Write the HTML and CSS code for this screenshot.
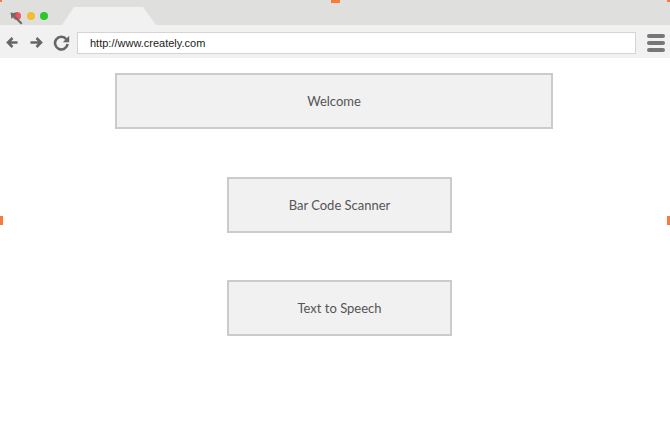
FILE: index.html
```html
<!DOCTYPE html>
<html>
<head>
<meta charset="utf-8">
<link rel="stylesheet" href="styles.css">
</head>
<body>
<div class="browser">
  <div class="tabbar">
    <div class="dots">
      <span class="dot red"></span>
      <span class="dot yellow"></span>
      <span class="dot green"></span>
    </div>
    <div class="tab"></div>
  </div>
  <div class="toolbar">
    <svg class="nav back" width="12" height="11" viewBox="0 0 12 11"><path d="M11.5 5.5H2M6.5 1L2 5.5L6.5 10" fill="none" stroke="#666" stroke-width="2.6" stroke-linejoin="miter"/></svg>
    <svg class="nav fwd" width="13" height="11" viewBox="0 0 13 11"><path d="M0.5 5.5H11M6.5 1L11 5.5L6.5 10" fill="none" stroke="#666" stroke-width="2.6"/></svg>
    <svg class="nav reload" width="17" height="16" viewBox="0 0 17 16"><path d="M13.3 4.2A6.3 6.3 0 1 0 14.6 9" fill="none" stroke="#666" stroke-width="2.6"/><path d="M16.2 0.8V7.2H9.8Z" fill="#666"/></svg>
    <div class="address">http://www.creately.com</div>
    <div class="menu"><span></span><span></span><span></span></div>
  </div>
  <div class="page">
    <div class="screen-btn wide">Welcome</div>
    <div class="screen-btn narrow first">Bar Code Scanner</div>
    <div class="screen-btn narrow second">Text to Speech</div>
  </div>
  <svg class="cursor" width="13" height="13" viewBox="0 0 13 13"><path d="M0.5 0.5L7 1.5L5 3.5L12.5 11L11 12.5L3.5 5L1.5 7Z" fill="#6a6a6a"/></svg>
  <span class="handle h-tl"></span>
  <span class="handle h-tc"></span>
  <span class="handle h-tr"></span>
  <span class="handle h-ml"></span>
  <span class="handle h-mr"></span>
</div>
</body>
</html>
```

FILE: styles.css
```css
html, body {
  margin: 0;
  padding: 0;
  background: #ffffff;
}
.browser {
  position: relative;
  width: 670px;
  height: 431px;
  overflow: hidden;
  background: #ffffff;
}
.tabbar {
  height: 25px;
  background: #dfe0dd;
  display: flex;
  align-items: flex-end;
}
.dots {
  align-self: flex-start;
  margin-top: 12px;
  margin-left: 13px;
  display: flex;
  gap: 5.5px;
}
.dot {
  width: 8px;
  height: 8px;
  border-radius: 50%;
  display: block;
}
.red { background: #f0515f; }
.yellow { background: #f4bd2f; }
.green { background: #2dc62b; }
.tab {
  margin-left: 14px;
  width: 94px;
  height: 18px;
  background: #f1f1f1;
  clip-path: polygon(12px 0, 81px 0, 100% 100%, 0 100%);
}
.toolbar {
  height: 31px;
  padding-top: 2px;
  background: #f1f1f1;
  display: flex;
  align-items: center;
  padding-left: 6px;
}
.nav { display: block; flex: none; }
.fwd { margin-left: 12px; }
.reload { margin-left: 10px; }
.address {
  margin-left: 7px;
  width: 545px;
  height: 20px;
  border: 1px solid #d4d4d4;
  background: #ffffff;
  box-sizing: content-box;
  padding-left: 12px;
  padding-right: 0;
  font-family: "Liberation Sans", Arial, sans-serif;
  font-size: 11px;
  line-height: 20px;
  color: #222;
}
.menu {
  margin-left: 11px;
  width: 18px;
  display: flex;
  flex-direction: column;
  gap: 3px;
}
.menu span {
  display: block;
  height: 4px;
  border-radius: 2px;
  background: #767676;
}
.page {
  padding-top: 15px;
  display: flex;
  flex-direction: column;
  align-items: flex-start;
}
.screen-btn {
  box-sizing: border-box;
  height: 56px;
  border: 2px solid #cbcbcb;
  background: #f1f1f1;
  display: flex;
  align-items: center;
  justify-content: center;
  font-family: Lato, "Open Sans", sans-serif;
  font-size: 13px;
  color: #555555;
}
.wide {
  margin-left: 115px;
  width: 438px;
}
.narrow {
  margin-left: 227px;
  width: 225px;
}
.first { margin-top: 48px; }
.second { margin-top: 47px; }
.cursor {
  position: absolute;
  left: 10px;
  top: 12px;
}
.handle {
  position: absolute;
  background: #fa7a3c;
  display: block;
}
.h-tl { left: 0; top: 0; width: 2px; height: 2px; }
.h-tc { left: 331px; top: 0; width: 9px; height: 3px; }
.h-tr { left: 667px; top: 0; width: 3px; height: 2px; }
.h-ml { left: 0; top: 216px; width: 3px; height: 9px; }
.h-mr { left: 667px; top: 216px; width: 3px; height: 9px; }
```
